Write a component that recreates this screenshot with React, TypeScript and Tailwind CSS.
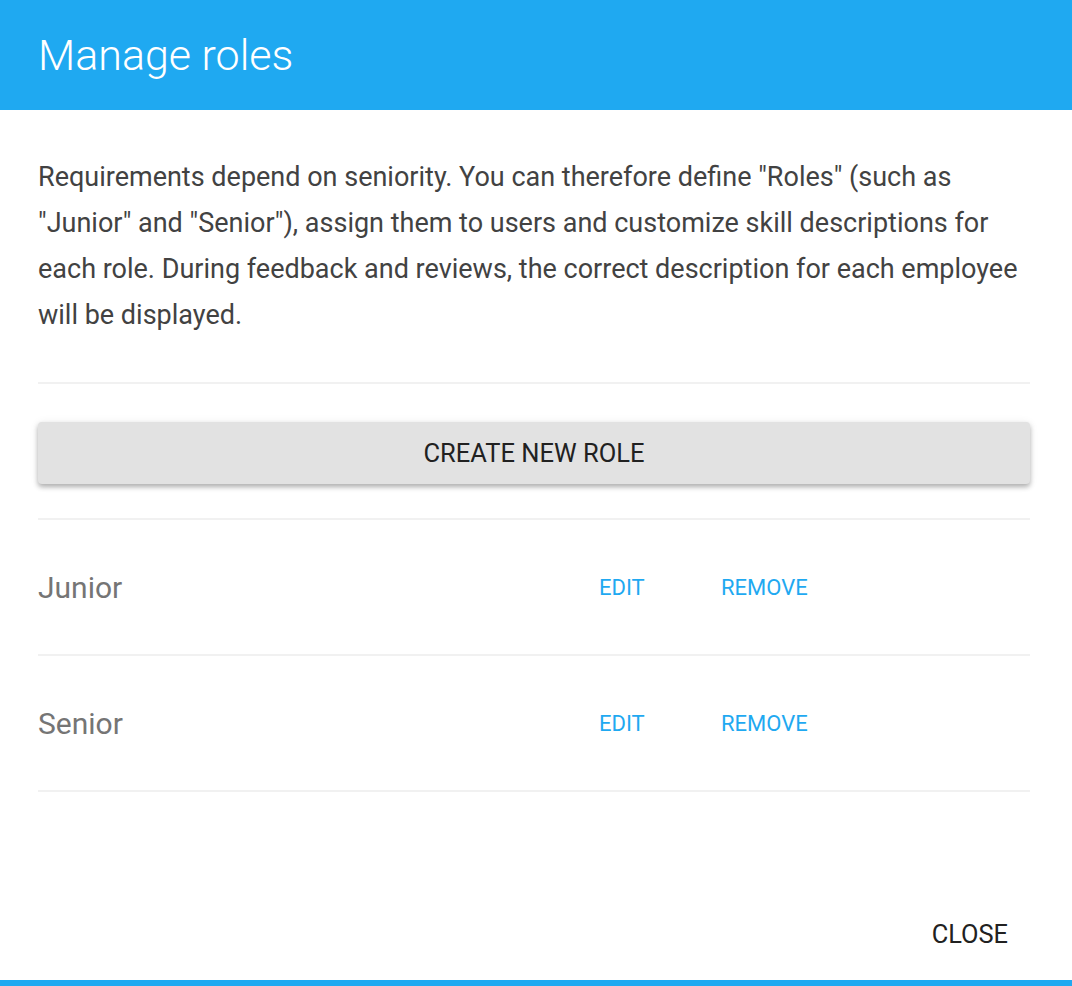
const ROLES = ["Junior", "Senior"];

export default function App() {
  return (
    <div
      className="w-[1072px] h-[986px] bg-white flex flex-col"
      style={{ fontFamily: "Roboto, 'Liberation Sans', sans-serif" }}
    >
      {/* Header */}
      <div className="h-[110px] shrink-0 bg-[#1fa9f1] flex items-center pl-[38px]">
        <h1 className="text-[43px] font-light text-white leading-none">Manage roles</h1>
      </div>

      {/* Body */}
      <div className="flex-1 flex flex-col pl-[38px] pr-[42px]">
        <p className="pt-[44px] text-[27px] leading-[46px] text-[#424242]">
          Requirements depend on seniority. You can therefore define "Roles" (such as "Junior" and
          "Senior"), assign them to users and customize skill descriptions for each role. During
          feedback and reviews, the correct description for each employee will be displayed.
        </p>

        <div className="mt-[44px] h-[2px] bg-[#f1f1f1]" />

        <button className="mt-[38px] h-[62px] w-full rounded-[4px] bg-[#e2e2e2] text-[25.5px] uppercase text-[#212121] shadow-[0_3px_5px_rgba(0,0,0,0.28),0_1px_10px_rgba(0,0,0,0.08)]">
          Create new role
        </button>

        <div className="mt-[34px] h-[2px] bg-[#f1f1f1]" />

        {ROLES.map((role) => (
          <div key={role}>
            <div className="h-[134px] flex items-center">
              <span className="w-[561px] text-[30px] text-[#757575]">{role}</span>
              <span className="w-[122px] text-[22px] uppercase text-[#1fa9f1]">Edit</span>
              <span className="text-[22px] uppercase text-[#1fa9f1]">Remove</span>
            </div>
            <div className="h-[2px] bg-[#f1f1f1]" />
          </div>
        ))}

        <div className="flex-1 flex items-end justify-end pb-[27px]">
          <button className="text-[25.4px] uppercase text-[#212121] mr-[22px]">Close</button>
        </div>
      </div>

      <div className="h-[6px] shrink-0 bg-[#1fa9f1]" />
    </div>
  );
}
